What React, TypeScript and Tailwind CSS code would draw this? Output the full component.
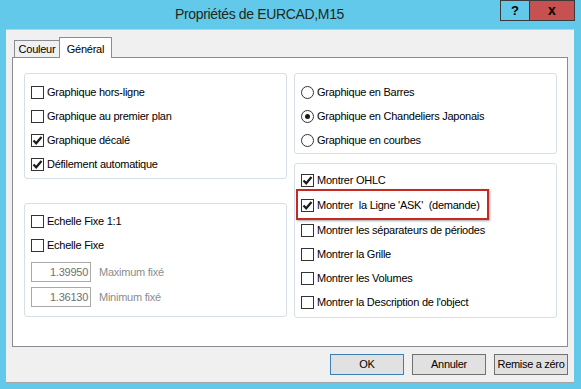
import React from "react";

const body = { fontFamily: '"Liberation Sans", Arial, sans-serif' };

function Check({ checked }: { checked?: boolean }) {
  return (
    <div className="w-[13px] h-[13px] border border-[#333333] bg-white shrink-0 flex items-center justify-center">
      {checked && (
        <svg width="11" height="11" viewBox="0 0 11 11">
          <path d="M1.5 5.5 L4.2 8.3 L9.5 2" fill="none" stroke="#1a1a1a" strokeWidth="2.2" />
        </svg>
      )}
    </div>
  );
}

function Radio({ checked }: { checked?: boolean }) {
  return (
    <div className="w-[13px] h-[13px] rounded-full border border-[#333333] bg-white shrink-0 flex items-center justify-center">
      {checked && <div className="w-[5px] h-[5px] rounded-full bg-[#1a1a1a]" />}
    </div>
  );
}

function CheckRow({ label, checked, h = "h-[24px]" }: { label: string; checked?: boolean; h?: string }) {
  return (
    <div className={`flex items-center gap-[3px] ${h}`}>
      <Check checked={checked} />
      <span className="text-[11px] tracking-[-0.25px] text-black leading-none whitespace-pre">{label}</span>
    </div>
  );
}

function RadioRow({ label, checked }: { label: string; checked?: boolean }) {
  return (
    <div className="flex items-center gap-[3px] h-[24px]">
      <Radio checked={checked} />
      <span className="text-[11px] tracking-[-0.25px] text-black leading-none">{label}</span>
    </div>
  );
}

function Field({ value, label }: { value: string; label: string }) {
  return (
    <div className="flex items-center h-[20px]">
      <div className="w-[60px] h-[20px] border border-[#a9a9a9] bg-white flex items-center justify-end pr-[2px] text-[11px] tracking-[-0.25px] text-[#707070]">
        {value}
      </div>
      <span className="ml-[8px] text-[11px] tracking-[-0.25px] text-[#8c8c8c]">{label}</span>
    </div>
  );
}

function Btn({ label, primary }: { label: string; primary?: boolean }) {
  return (
    <div
      className={`w-[74px] h-[21px] flex items-center justify-center bg-[#e1e1e1] border text-[11px] tracking-[-0.3px] text-black ${
        primary ? "border-[#3c7fb1]" : "border-[#707070]"
      }`}
    >
      {label}
    </div>
  );
}

export default function App() {
  return (
    <div className="w-[581px] h-[389px] bg-[#63c9ea] overflow-hidden" style={body}>
      {/* title bar */}
      <div className="h-[29px] flex items-start pl-[6px] pr-[6px]">
        <div className="flex-1 h-[29px] flex items-center justify-center pl-[13px] text-[14px] text-[#1e2a20] tracking-[-0.35px]">
          Propriétés de EURCAD,M15
        </div>
        <div className="flex h-[21px]">
          <div className="w-[29px] h-[21px] border border-[#3a3a3a] border-r-0 bg-[#63c9ea] flex items-center justify-center text-[13px] font-bold text-black">
            ?
          </div>
          <div className="w-[46px] h-[21px] border border-[#3a3a3a] bg-[#c75050] flex items-center justify-center text-[14px] font-bold text-black">
            x
          </div>
        </div>
      </div>

      {/* client */}
      <div className="ml-[6px] w-[568px] h-[354px] bg-[#f0f0f0] border-t border-t-[#c8ccd0] border-b border-b-[#a0a4a8] pt-[7px]">
        {/* tab strip */}
        <div className="ml-[8px] h-[20px] flex items-end">
          <div className="h-[17px] w-[46px] border border-b-0 border-[#898c95] bg-[#f0f0f0] flex items-center justify-center text-[11px] tracking-[-0.25px] text-black">
            Couleur
          </div>
          <div className="relative z-10 h-[21px] -mb-[1px] w-[53px] border border-b-0 border-[#898c95] bg-white flex items-start justify-center pt-[3px] text-[11px] tracking-[-0.25px] text-black -ml-px">
            Général
          </div>
        </div>

        {/* tab page */}
        <div className="ml-[6px] w-[556px] h-[290px] border border-[#898c95] bg-white pl-[11px] pt-[15px] flex gap-[7px]">
          {/* left column */}
          <div className="w-[263px] flex flex-col gap-[24px]">
            <div className="h-[106px] rounded-[3px] border border-[#d5dfe5] pl-[6px] pt-[6px]">
              <CheckRow label="Graphique hors-ligne" />
              <CheckRow label="Graphique au premier plan" />
              <CheckRow label="Graphique décalé" checked />
              <CheckRow label="Défilement automatique" checked />
            </div>
            <div className="h-[114px] rounded-[3px] border border-[#d5dfe5] pl-[6px] pt-[5px]">
              <CheckRow label="Echelle Fixe 1:1" />
              <CheckRow label="Echelle Fixe" h="h-[25px]" />
              <div className="mt-[4px] flex flex-col gap-[5px]">
                <Field value="1.39950" label="Maximum fixé" />
                <Field value="1.36130" label="Minimum fixé" />
              </div>
            </div>
          </div>

          {/* right column */}
          <div className="w-[263px] flex flex-col gap-[9px]">
            <div className="h-[81px] rounded-[3px] border border-[#d5dfe5] pl-[6px] pt-[6px]">
              <RadioRow label="Graphique en Barres" />
              <RadioRow label="Graphique en Chandeliers Japonais" checked />
              <RadioRow label="Graphique en courbes" />
            </div>
            <div className="h-[155px] rounded-[3px] border border-[#d5dfe5] pl-[6px] pt-[5px]">
              <CheckRow label="Montrer OHLC" checked h="h-[23px]" />
              <div className="relative">
                <div className="absolute left-[-5px] top-[-3px] w-[193px] h-[31px] border-2 border-[#c42a22] shadow-[1px_1px_2px_rgba(0,0,0,0.35)]" />
                <CheckRow label="Montrer  la Ligne 'ASK'  (demande)" checked h="h-[26px]" />
              </div>
              <CheckRow label="Montrer les séparateurs de périodes" />
              <CheckRow label="Montrer la Grille" />
              <CheckRow label="Montrer les Volumes" />
              <CheckRow label="Montrer la Description de l'object" />
            </div>
          </div>
        </div>

        {/* buttons */}
        <div className="mt-[7px] flex justify-end gap-[8px] pr-[6px]">
          <Btn label="OK" primary />
          <Btn label="Annuler" />
          <Btn label="Remise a zéro" />
        </div>
      </div>
    </div>
  );
}
